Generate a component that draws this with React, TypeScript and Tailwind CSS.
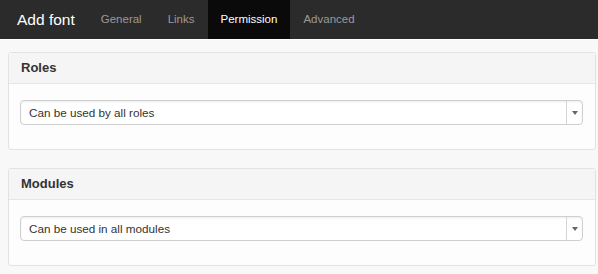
import React from "react";

function Select({ label }: { label: string }) {
  return (
    <div className="flex h-[25px] items-stretch rounded-[4px] border border-[#cfcfcf] bg-white shadow-[inset_0_1px_2px_rgba(0,0,0,0.08)]">
      <div className="flex flex-1 items-center pl-[8px] text-[11.7px] text-[#333]">{label}</div>
      <div className="flex w-[16px] items-center justify-center border-l border-[#d5d5d5]">
        <svg width="6" height="4" viewBox="0 0 6 4">
          <path d="M0 0 L6 0 L3 4 Z" fill="#666" />
        </svg>
      </div>
    </div>
  );
}

function Panel({ title, label, className }: { title: string; label: string; className?: string }) {
  return (
    <div className={"rounded-[3px] border border-[#e2e2e2] bg-[#fdfdfd] " + (className ?? "")}>
      <div className="flex h-[31px] items-center border-b border-[#e6e6e6] bg-[#f5f5f5] pl-[12px] text-[13px] font-bold text-[#333]">
        {title}
      </div>
      <div className="pb-[24px] pl-[11px] pr-[12px] pt-[16px]">
        <Select label={label} />
      </div>
    </div>
  );
}

export default function App() {
  const tabs = ["General", "Links", "Permission", "Advanced"];
  return (
    <div className="h-[274px] w-[598px] overflow-hidden bg-[#f8f8f8] font-['Liberation_Sans',Arial,sans-serif]">
      <div className="flex h-[39px] items-stretch bg-[#2b2b2b]">
        <div className="flex items-center pl-[17px] pr-[13px] text-[15.5px] text-white">Add font</div>
        {tabs.map((t) => (
          <div
            key={t}
            className={
              t === "Permission"
                ? "flex items-center bg-[#0a0a0a] px-[13px] text-[11.5px] text-white"
                : "flex items-center px-[13px] text-[11.5px] text-[#9a9a9a]"
            }
          >
            {t}
          </div>
        ))}
      </div>
      <div className="h-[1px] bg-white" />
      <div className="pl-[8px] pr-[2px] pt-[12px]">
        <Panel title="Roles" label="Can be used by all roles" />
        <Panel title="Modules" label="Can be used in all modules" className="mt-[18px]" />
      </div>
    </div>
  );
}
